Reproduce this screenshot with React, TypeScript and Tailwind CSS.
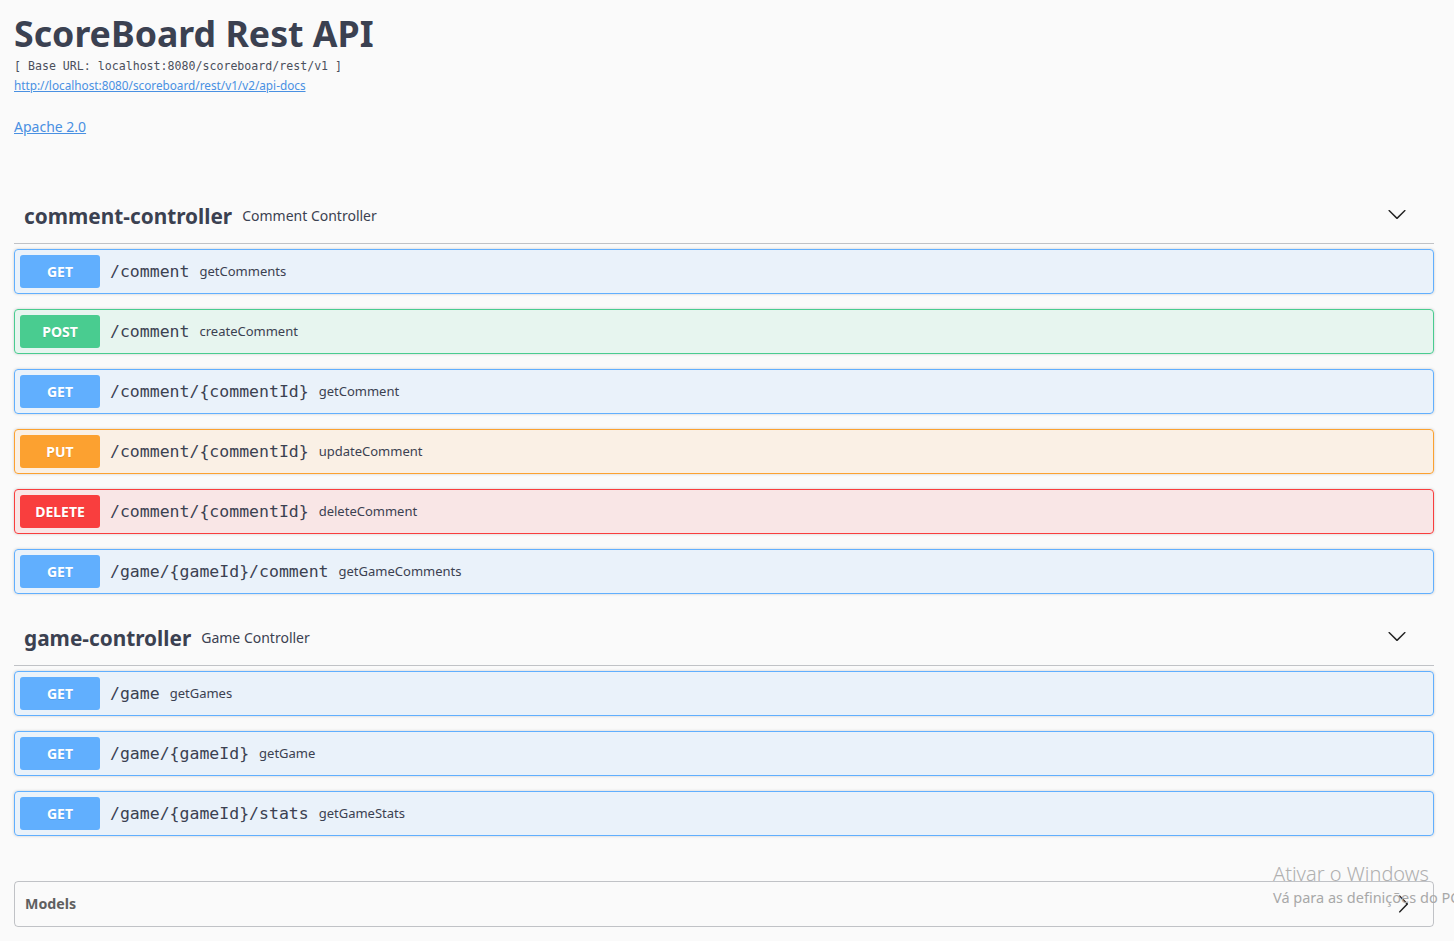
import React from "react";

type Method = "GET" | "POST" | "PUT" | "DELETE";

const styles: Record<Method, { border: string; bg: string; badge: string }> = {
  GET: { border: "border-[#61affe]", bg: "bg-[rgba(97,175,254,0.1)]", badge: "bg-[#61affe]" },
  POST: { border: "border-[#49cc90]", bg: "bg-[rgba(73,204,144,0.1)]", badge: "bg-[#49cc90]" },
  PUT: { border: "border-[#fca130]", bg: "bg-[rgba(252,161,48,0.1)]", badge: "bg-[#fca130]" },
  DELETE: { border: "border-[#f93e3e]", bg: "bg-[rgba(249,62,62,0.1)]", badge: "bg-[#f93e3e]" },
};

function Op({ method, path, summary }: { method: Method; path: string; summary: string }) {
  const s = styles[method];
  return (
    <div
      className={`flex items-center rounded-[4px] border p-[5px] shadow-[0_0_3px_rgba(0,0,0,0.19)] ${s.border} ${s.bg}`}
    >
      <span
        className={`flex h-[33px] w-[80px] items-center justify-center rounded-[3px] text-[14px] font-bold text-white [text-shadow:0_1px_0_rgba(0,0,0,0.1)] ${s.badge}`}
      >
        {method}
      </span>
      <span className="mt-[2px] px-[10px] font-['DejaVu_Sans_Mono',monospace] text-[16.5px] text-[#3b4151]">
        {path}
      </span>
      <span className="mt-[1px] text-[13px] text-[#3b4151]">{summary}</span>
    </div>
  );
}

function ChevronDown() {
  return (
    <svg width="20" height="20" viewBox="0 0 20 20" className="shrink-0" fill="#222">
      <path d="M17.418 6.109c.272-.268.709-.268.979 0s.271.701 0 .969l-7.908 7.83c-.27.268-.707.268-.979 0l-7.908-7.83c-.27-.268-.27-.701 0-.969.271-.268.709-.268.979 0L10 13.25l7.418-7.141z" />
    </svg>
  );
}

function ChevronRight() {
  return (
    <svg width="20" height="20" viewBox="0 0 20 20" className="shrink-0" fill="#222">
      <path d="M13.25 10L6.109 2.58c-.268-.27-.268-.707 0-.979.268-.27.701-.27.969 0l7.83 7.908c.268.271.268.709 0 .979l-7.83 7.908c-.268.271-.701.27-.969 0-.268-.269-.268-.707 0-.979L13.25 10z" />
    </svg>
  );
}

function Tag({ name, desc }: { name: string; desc: string }) {
  return (
    <div className="mb-[5px] flex h-[57px] items-center border-b border-[rgba(59,65,81,0.3)] pl-[10px] pr-[27px]">
      <span className="mt-[3px] text-[20.8px] font-bold text-[#3b4151]">{name}</span>
      <span className="flex-1 px-[10px] text-[14px] text-[#3b4151]">{desc}</span>
      <span className="-mt-[2px]">
        <ChevronDown />
      </span>
    </div>
  );
}

export default function App() {
  return (
    <div className="relative min-h-[941px] overflow-hidden bg-[#fafafa] font-['Noto_Sans',sans-serif] text-[#3b4151]">
      <div className="flex flex-col pl-[14px] pr-[20px] pt-[11px]">
        <h2 className="text-[35.7px] font-bold leading-[44px] text-[#3b4151]">ScoreBoard Rest API</h2>
        <div className="mt-[3px] font-['DejaVu_Sans_Mono',monospace] text-[11.6px] leading-[16px] text-[#4a4f5c]">
          [ Base URL: localhost:8080/scoreboard/rest/v1 ]
        </div>
        <div className="mt-[3px] text-[11.75px] leading-[16px]">
          <a className="text-[#4990e2] underline">http://localhost:8080/scoreboard/rest/v1/v2/api-docs</a>
        </div>
        <div className="mt-[24px] text-[14px] leading-[20px]">
          <a className="text-[#4990e2] underline">Apache 2.0</a>
        </div>

        <div className="mt-[50px] flex flex-col gap-[15px]">
          <div className="-mb-[15px]">
            <Tag name="comment-controller" desc="Comment Controller" />
          </div>
          <Op method="GET" path="/comment" summary="getComments" />
          <Op method="POST" path="/comment" summary="createComment" />
          <Op method="GET" path="/comment/{commentId}" summary="getComment" />
          <Op method="PUT" path="/comment/{commentId}" summary="updateComment" />
          <Op method="DELETE" path="/comment/{commentId}" summary="deleteComment" />
          <Op method="GET" path="/game/{gameId}/comment" summary="getGameComments" />
        </div>
        <div className="mt-[15px] flex flex-col gap-[15px]">
          <div className="-mb-[15px]">
            <Tag name="game-controller" desc="Game Controller" />
          </div>
          <Op method="GET" path="/game" summary="getGames" />
          <Op method="GET" path="/game/{gameId}" summary="getGame" />
          <Op method="GET" path="/game/{gameId}/stats" summary="getGameStats" />
        </div>

        <div className="mt-[45px] rounded-[4px] border border-[rgba(59,65,81,0.3)]">
          <div className="flex h-[44px] items-center pl-[10px] pr-[20px]">
            <span className="flex-1 text-[14.2px] font-bold text-[#606060]">Models</span>
            <ChevronRight />
          </div>
        </div>
      </div>

      <div className="pointer-events-none absolute left-[1273px] top-[861px] whitespace-nowrap font-['Noto_Sans',sans-serif] text-[#b0b0b0]">
        <div className="text-[20px] font-light leading-[26px]">Ativar o Windows</div>
        <div className="text-[14.5px] leading-[20px] text-[#a8a8a8]">Vá para as definições do PC</div>
      </div>
    </div>
  );
}
